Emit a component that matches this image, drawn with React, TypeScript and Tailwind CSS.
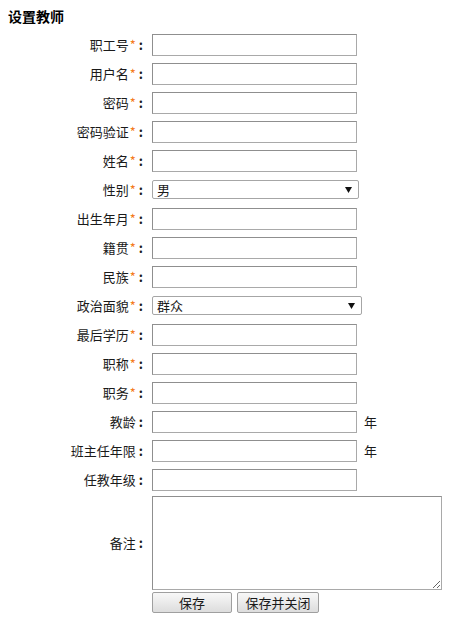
import React from 'react';

type Row = {
  label: string;
  required?: boolean;
  kind?: 'input' | 'select';
  value?: string;
  selectWidth?: string;
  suffix?: string;
};

const rows: Row[] = [
  { label: '职工号', required: true },
  { label: '用户名', required: true },
  { label: '密码', required: true },
  { label: '密码验证', required: true },
  { label: '姓名', required: true },
  { label: '性别', required: true, kind: 'select', value: '男', selectWidth: 'w-[207px]' },
  { label: '出生年月', required: true },
  { label: '籍贯', required: true },
  { label: '民族', required: true },
  { label: '政治面貌', required: true, kind: 'select', value: '群众', selectWidth: 'w-[210px]' },
  { label: '最后学历', required: true },
  { label: '职称', required: true },
  { label: '职务', required: true },
  { label: '教龄', suffix: '年' },
  { label: '班主任年限', suffix: '年' },
  { label: '任教年级' },
];

const Label = ({ text, required }: { text: string; required?: boolean }) => (
  <div className="w-[147px] shrink-0 text-right pr-[4px] whitespace-nowrap">
    {text}
    {required && <span className="text-[#f47a20] ml-[1px]">*</span>}
    <span className="font-bold ml-[3px]">:</span>
  </div>
);

const FakeSelect = ({ value, width }: { value?: string; width?: string }) => (
  <div
    className={`${width} h-[19px] border border-[#a6a6a6] rounded-[2px] bg-white flex items-center justify-between pl-[4px] pr-[6px]`}
  >
    <span className="leading-none">{value}</span>
    <svg width="7" height="6" viewBox="0 0 7 6">
      <path d="M0 0h7L3.5 6z" fill="#111" />
    </svg>
  </div>
);

const App = () => {
  return (
    <div
      className="w-[458px] h-[620px] bg-white text-[#1a1a1a] text-[13px] overflow-hidden"
      style={{ fontFamily: '"Noto Sans CJK SC", "Noto Sans", sans-serif' }}
    >
      <div className="h-[30px] pl-[8px] pt-[7px] text-[14px] font-bold text-black leading-[18px]">设置教师</div>

      {rows.map((r) => (
        <div key={r.label} className="flex items-center h-[29px]">
          <Label text={r.label} required={r.required} />
          <div className="ml-[5px] flex items-center">
            {r.kind === 'select' ? (
              <FakeSelect value={r.value} width={r.selectWidth} />
            ) : (
              <input
                type="text"
                className="w-[205px] h-[22px] border border-[#a9a9a9] border-t-[#8f8f8f] border-l-[#8f8f8f] bg-white outline-none"
              />
            )}
            {r.suffix && <span className="ml-[7px]">{r.suffix}</span>}
          </div>
        </div>
      ))}

      <div className="flex items-center pt-[2px]">
        <Label text="备注" />
        <textarea className="ml-[5px] w-[290px] h-[94px] border border-[#a9a9a9] border-t-[#8f8f8f] border-l-[#8f8f8f] bg-white outline-none" />
      </div>

      <div className="flex pl-[152px] pt-[2px] gap-[5px]">
        <button className="w-[80px] h-[21px] border border-[#9f9f9f] rounded-[2px] bg-gradient-to-b from-[#f8f8f8] to-[#dddddd] leading-none">
          保存
        </button>
        <button className="w-[82px] h-[21px] border border-[#9f9f9f] rounded-[2px] bg-gradient-to-b from-[#f8f8f8] to-[#dddddd] leading-none">
          保存并关闭
        </button>
      </div>
    </div>
  );
};

export default App;
